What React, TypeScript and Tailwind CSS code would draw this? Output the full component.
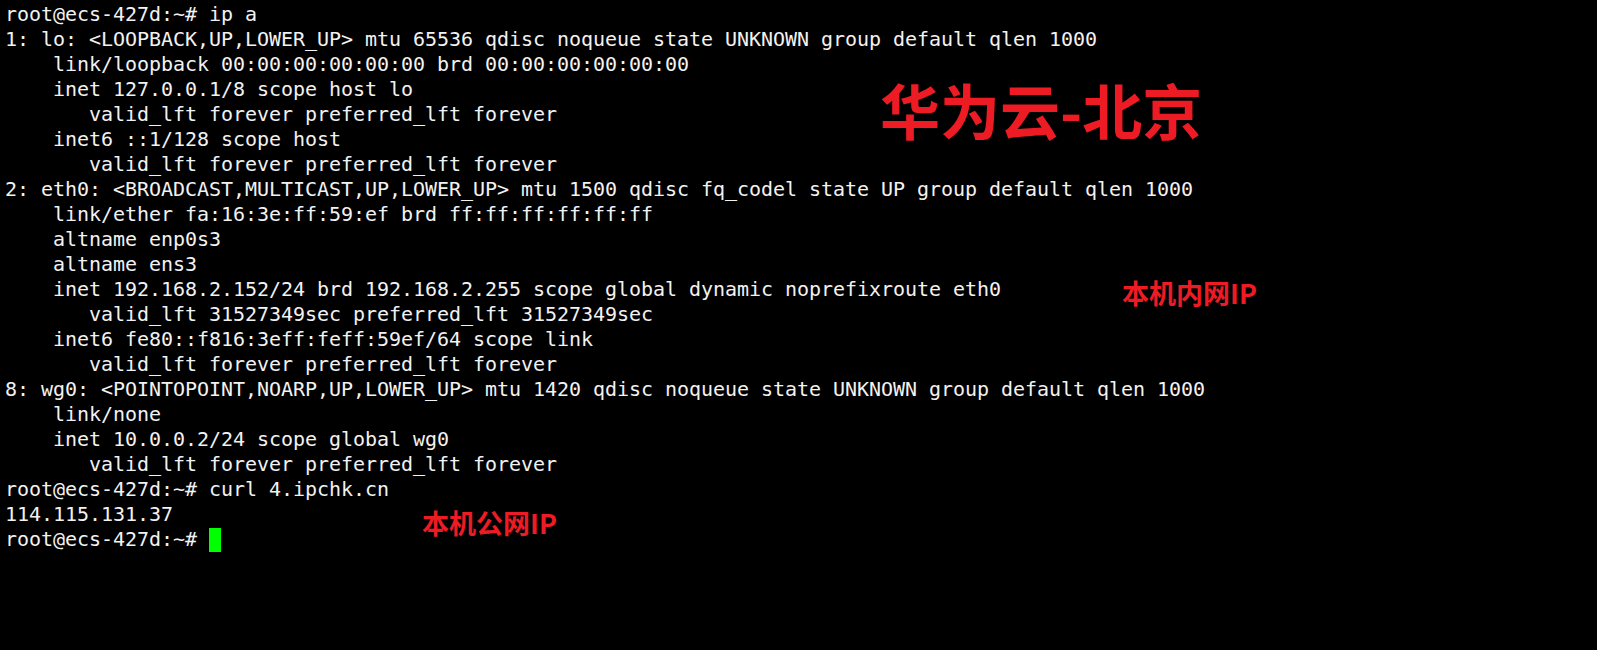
import React from 'react';

const lines = [
  'root@ecs-427d:~# ip a',
  '1: lo: <LOOPBACK,UP,LOWER_UP> mtu 65536 qdisc noqueue state UNKNOWN group default qlen 1000',
  '    link/loopback 00:00:00:00:00:00 brd 00:00:00:00:00:00',
  '    inet 127.0.0.1/8 scope host lo',
  '       valid_lft forever preferred_lft forever',
  '    inet6 ::1/128 scope host',
  '       valid_lft forever preferred_lft forever',
  '2: eth0: <BROADCAST,MULTICAST,UP,LOWER_UP> mtu 1500 qdisc fq_codel state UP group default qlen 1000',
  '    link/ether fa:16:3e:ff:59:ef brd ff:ff:ff:ff:ff:ff',
  '    altname enp0s3',
  '    altname ens3',
  '    inet 192.168.2.152/24 brd 192.168.2.255 scope global dynamic noprefixroute eth0',
  '       valid_lft 31527349sec preferred_lft 31527349sec',
  '    inet6 fe80::f816:3eff:feff:59ef/64 scope link',
  '       valid_lft forever preferred_lft forever',
  '8: wg0: <POINTOPOINT,NOARP,UP,LOWER_UP> mtu 1420 qdisc noqueue state UNKNOWN group default qlen 1000',
  '    link/none',
  '    inet 10.0.0.2/24 scope global wg0',
  '       valid_lft forever preferred_lft forever',
  'root@ecs-427d:~# curl 4.ipchk.cn',
  '114.115.131.37',
];

const label = "font-['Noto_Sans_CJK_SC',sans-serif] font-bold text-[#ed1c24] leading-none whitespace-nowrap absolute";

export default function App() {
  return (
    <div className="relative w-[1597px] h-[650px] bg-black overflow-hidden">
      <div className="pl-[5px] pt-[2px] font-['DejaVu_Sans_Mono',monospace] text-[20px] leading-[25px] tracking-[-0.04px] text-[#f2f2f2] whitespace-pre">
        {lines.map((l, i) => (
          <div key={i}>{l}</div>
        ))}
        <div className="flex items-center">
          <span>root@ecs-427d:~# </span>
          <span className="inline-block w-[12px] h-[24px] bg-[#00ff00]" />
        </div>
      </div>

      <div className={`${label} left-[880px] top-[79px] text-[60px]`}>华为云-北京</div>
      <div className={`${label} left-[1122px] top-[279px] text-[27px]`}>本机内网IP</div>
      <div className={`${label} left-[422px] top-[509px] text-[27px]`}>本机公网IP</div>
    </div>
  );
}
